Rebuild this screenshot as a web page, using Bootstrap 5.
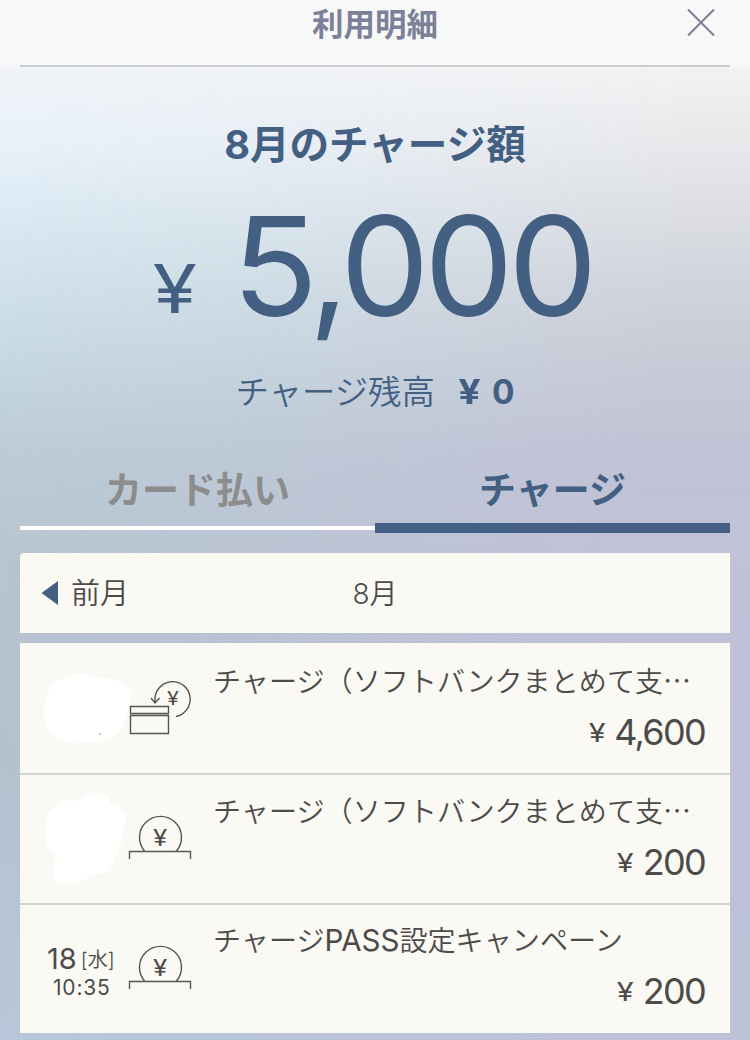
<!DOCTYPE html>
<html lang="ja">
<head>
<meta charset="utf-8">
<meta name="viewport" content="width=device-width, initial-scale=1">
<title>利用明細</title>
<link href="https://cdn.jsdelivr.net/npm/bootstrap@5.3.0/dist/css/bootstrap.min.css" rel="stylesheet">
<style>
  :root { --navy: #435f82; --ink: #4c4b49; --paper: #fbf9f4; }
  body { font-family: Inter, "Noto Sans CJK JP", sans-serif; color: var(--ink); overflow: hidden; }
  .screen { height: 1040px; isolation: isolate;
    background: linear-gradient(180deg, #f1f4f8 66px, #e8f1fa 145px, #d7e7f0 235px, #c9dbe5 340px, #bccdd8 450px, #b7c5d0 560px, #b5c1ce 760px, #b5c6d5 920px, #b7c8da 1040px); }
  .screen::before { content: ""; position: absolute; inset: 0; z-index: -1;
    background: linear-gradient(180deg, #f2f2f3 66px, #e8e9eb 135px, #dddfe4 210px, #d0d3db 290px, #c7cad6 370px, #c2c2d6 450px, #c0c0d8 620px, #bec1d8 800px, #bcc1d6 1040px);
    -webkit-mask-image: linear-gradient(97deg, transparent 5%, rgba(0,0,0,.35) 38%, #000 80%);
    mask-image: linear-gradient(97deg, transparent 5%, rgba(0,0,0,.35) 38%, #000 80%); }
  .topbar { height: 67px; background: #f8f8f8; }
  .topbar-inner { height: 67px; border-bottom: 2px solid #cdced0; }
  .topbar h1 { font-size: 31.5px; line-height: 49px; font-weight: 700; color: #7c8199; }
  .closer { top: 8px; right: 14px; width: 30px; height: 30px; color: #7a8098; }
  .navy { color: var(--navy); }
  .summary { height: 396px; padding-top: 49px; }
  .summary h2 { font-size: 39.6px; line-height: 58px; font-weight: 700; }
  .wide { display: inline-block; transform: scaleX(1.18); }
  .total { height: 164px; margin-top: 10px; padding-right: 7px; line-height: 164px; }
  .total .yen { font-size: 68px; margin-right: 44px; transform: translateY(-3px) scaleX(1.18); }
  .total .num { font-size: 138px; letter-spacing: -5.500px; transform: scaleX(1.03); }
  .total .five { letter-spacing: -9.500px; }
  .balance { font-size: 33.4px; line-height: 50px; margin-top: 19px; font-weight: 350; }
  .balance b { margin-left: 25px; font-weight: 700; }
  .balance .zero { margin-left: 13px; }
  .tabs { height: 70px; }
  .tab-item { font-size: 37px; line-height: 54px; font-weight: 700; color: #8c8c8c; text-align: center; text-decoration: none; padding-top: 1px; }
  .tab-item::after { content: ""; display: block; height: 4px; background: #fff; margin-top: 8px; }
  .tab-item.on { color: var(--navy); }
  .tab-item.on::after { height: 10px; background: var(--navy); margin-top: 5px; }
  .month { height: 80px; margin-top: 20px; background: var(--paper); border-radius: 4px 0 0 0; font-size: 29px; font-weight: 350; padding: 0 21px; }
  .month span { padding-top: 2px; }
  .month .now { font-size: 28px; }
  .history { margin-top: 10px; background: var(--paper); }
  .entry { height: 130px; }
  .entry + .entry { border-top: 2px solid #d0d5d5; }
  .when { width: 173px; flex: none; }
  .what { width: 537px; padding: 13px 25px 0 20px; }
  .entry + .entry .what { padding-top: 11px; }
  .title { font-size: 28.1px; line-height: 48px; font-weight: 350; }
  .title .lat { font-weight: 400; font-size: 29.5px; }
  .title .dots { font-family: "Noto Sans CJK JP", sans-serif; }
  .price { font-size: 36px; line-height: 52px; letter-spacing: -1.7px; }
  .price small { font-size: 26px; margin-right: 12px; transform: translateY(-3px) scaleX(1.18); }
  .stamp { top: 39px; left: 27px; width: 70px; }
  .day { font-size: 29px; line-height: 29px; }
  .day small { font-size: 20px; font-weight: 350; position: relative; top: -2px; }
  .time { font-size: 21px; line-height: 22px; letter-spacing: .8px; padding-left: 6px; }
  svg { display: block; }
  .line-art { fill: none; stroke: #565553; stroke-width: 1.4; }
</style>
</head>
<body>
<div class="screen position-relative">
  <header class="topbar px-3">
    <div class="topbar-inner position-relative mx-1 text-center">
      <h1 class="m-0">利用明細</h1>
      <button class="closer position-absolute btn p-0 border-0" aria-label="閉じる">
        <svg width="30" height="30" viewBox="0 0 30 30" stroke="currentColor" stroke-width="2" fill="none"><path d="M2 1.500L28 27.500M28 1.500L2 27.500"/></svg>
      </button>
    </div>
  </header>

  <section class="summary navy text-center">
    <h2 class="m-0">8月のチャージ額</h2>
    <div class="total d-flex justify-content-center align-items-baseline"><span class="yen wide">¥</span><span class="num"><span class="five">5</span>,000</span></div>
    <div class="balance">チャージ残高<b><span class="wide">¥</span><span class="zero">0</span></b></div>
  </section>

  <main class="px-3"><div class="mx-1">
    <nav class="tabs d-flex">
      <a class="tab-item w-50">カード払い</a>
      <a class="tab-item on w-50">チャージ</a>
    </nav>

    <div class="month d-flex align-items-center position-relative">
      <svg width="18" height="24" viewBox="0 0 18 24"><path d="M.5 12L17 0V24Z" fill="#435f82"/></svg>
      <span class="ms-2 ps-1">前月</span>
      <span class="now position-absolute start-50 translate-middle-x">8月</span>
    </div>

    <div class="history">
      <article class="entry d-flex">
        <div class="when">
          <svg width="173" height="129">
            <path fill="#fff" d="M27 53C28 41 40 34 52 33C60 28 69 33 77 35C91 33 113 43 112 53C108 64 108 77 101 88C89 98 72 102 57 97C42 103 31 94 27 83C22 73 23 63 27 53Z"/>
            <circle cx="80" cy="91" r="1" fill="#aaa"/>
            <g class="line-art"><path d="M110.500 63.500H148.500V70.500H110.500ZM110.500 72.500H148.500V90.500H110.500Z"/><path d="M135 59V57A17.600 17.600 0 1 1 156 73.500M131 55L135 60L139.500 55"/></g>
            <text transform="translate(153 62) scale(1.2 1)" text-anchor="middle" font-size="18" fill="#4c4b49">¥</text>
          </svg>
        </div>
        <div class="what">
          <div class="title text-nowrap">チャージ（ソフトバンクまとめて支<span class="dots">…</span></div>
          <div class="price text-end"><small class="wide">¥</small>4,600</div>
        </div>
      </article>

      <article class="entry d-flex">
        <div class="when">
          <svg width="173" height="128">
            <path fill="#fff" d="M28 39C34 29 45 25 53 25C62 29 64 18 74 18C83 16 88 22 91 30C101 31 107 39 105 48C102 57 104 67 98 74C95 82 94 94 88 97C79 99 72 98 65 104C57 108 41 113 36 106C31 97 37 87 35 78C25 74 25 63 26 54C28 48 25 44 28 39Z"/>
            <g class="line-art"><path d="M109.500 84V76.500H170.500V84M125 76.500A21 21 0 1 1 156 76.500"/></g>
            <text transform="translate(140 70.500) scale(1.15 1)" text-anchor="middle" font-size="22.500" fill="#4c4b49">¥</text>
          </svg>
        </div>
        <div class="what">
          <div class="title text-nowrap">チャージ（ソフトバンクまとめて支<span class="dots">…</span></div>
          <div class="price text-end"><small class="wide">¥</small>200</div>
        </div>
      </article>

      <article class="entry d-flex">
        <div class="when position-relative">
          <div class="stamp position-absolute text-nowrap">
            <div class="day">18<small class="ms-1">[水]</small></div>
            <div class="time">10:35</div>
          </div>
          <svg width="173" height="128">
            <g class="line-art"><path d="M109.500 84V76.500H170.500V84M125 76.500A21 21 0 1 1 156 76.500"/></g>
            <text transform="translate(140 70.500) scale(1.15 1)" text-anchor="middle" font-size="22.500" fill="#4c4b49">¥</text>
          </svg>
        </div>
        <div class="what">
          <div class="title text-nowrap">チャージ<span class="lat">PASS</span>設定キャンペーン</div>
          <div class="price text-end"><small class="wide">¥</small>200</div>
        </div>
      </article>
    </div>
  </div></main>
</div>
<script src="https://cdn.jsdelivr.net/npm/bootstrap@5.3.0/dist/js/bootstrap.bundle.min.js"></script>
</body>
</html>
